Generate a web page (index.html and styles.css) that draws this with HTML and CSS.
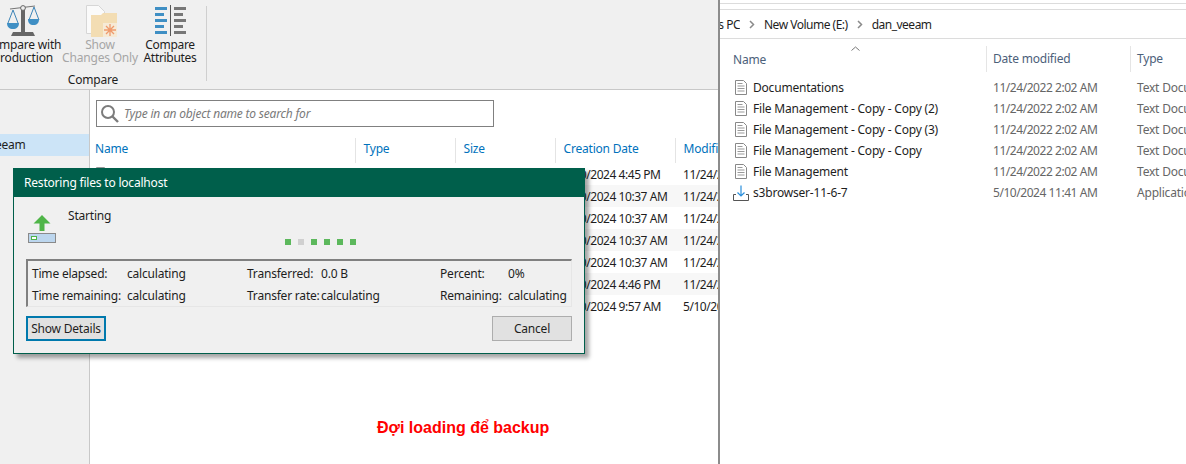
FILE: index.html
```html
<!DOCTYPE html>
<html lang="en">
<head>
    <meta charset="UTF-8">
    <meta name="viewport" content="width=device-width, initial-scale=1.0">
    <title>Restoring files to localhost</title>
    <link rel="stylesheet" href="styles.css">
</head>
<body>
    <div class="screen">
        <!-- Backup console window -->
        <section class="console">
            <div class="ribbon">
                <div class="ribbon-group">
                    <div class="ribbon-buttons">
                        <div class="ribbon-btn btn-production">
                            <svg width="34" height="33" viewBox="0 0 34 33">
                                <path d="M7 28h20l2 4H5z" fill="#666"/>
                                <rect x="15" y="4" width="4" height="25" fill="#666"/>
                                <path d="M4 5L29 2" stroke="#777" stroke-width="1.2"/>
                                <circle cx="17" cy="4" r="2.4" fill="#eee" stroke="#666"/>
                                <path d="M7 6L2 19M7 6l5 13M28 3l-5 13M28 3l5 13" stroke="#3d85b8" fill="none" stroke-width="1"/>
                                <path d="M1 19h12c0 4-2.500 6-6 6s-6-2-6-6zM22 15h11c0 4-2 6-5.500 6S22 19 22 15z" fill="#3f8fc4"/>
                            </svg>
                            <span>Compare with<br>Production</span>
                        </div>
                        <div class="ribbon-btn btn-changes is-disabled">
                            <svg width="34" height="33" viewBox="0 0 34 33">
                                <path d="M3.500 1.500h12l6 6v22h-18z" fill="#fafafa" stroke="#d6d6d6"/>
                                <path d="M8 14V11h10l2-2h14v24H8z" fill="#f3ddb3"/>
                                <rect x="20" y="19" width="14" height="14" fill="#f6ead6"/>
                                <path d="M27 20v12M21 26h12M23 22l8 8M31 22l-8 8" stroke="#ef9a6c" stroke-width="1.300"/>
                            </svg>
                            <span>Show<br>Changes Only</span>
                        </div>
                        <div class="ribbon-btn btn-attributes">
                            <svg width="34" height="33" viewBox="0 0 34 33">
                                <path d="M2 3h12v3H2zM2 9h9v3H2zM2 15h12v3H2zM2 21h9v3H2zM2 27h12v3H2z" fill="#3f8fc4"/>
                                <rect x="17" y="1" width="1" height="31" fill="#555"/>
                                <path d="M21 3h12v3H21zM21 9h9v3h-9zM21 15h12v3H21zM21 21h9v3h-9zM21 27h12v3H21z" fill="#777"/>
                            </svg>
                            <span>Compare<br>Attributes</span>
                        </div>
                    </div>
                    <div class="group-label">Compare</div>
                </div>
                <div class="ribbon-sep"></div>
            </div>

            <div class="console-body">
                <aside class="sidebar">
                    <div class="side-item"><span>dan_veeam</span></div>
                </aside>
                <main class="content">
                    <div class="search">
                        <svg width="19" height="19" viewBox="0 0 19 19">
                            <circle cx="8" cy="8" r="6" fill="none" stroke="#7c7c7c" stroke-width="2"/>
                            <path d="M12.500 12.500L18 18" stroke="#7c7c7c" stroke-width="2.400"/>
                        </svg>
                        <span>Type in an object name to search for</span>
                    </div>
                    <table class="objects">
                        <thead>
                            <tr>
                                <th>Name</th>
                                <th>Type</th>
                                <th>Size</th>
                                <th>Creation Date</th>
                                <th>Modified</th>
                            </tr>
                        </thead>
                        <tbody>
                            <tr><td><svg class="row-icon" width="12" height="15" viewBox="0 0 12 15"><path d="M.5.500h8l3 3v11H.5z" fill="#fff" stroke="#999"/></svg></td><td></td><td></td><td>5/10/2024 4:45 PM</td><td>11/24/2022 2:02 AM</td></tr>
                            <tr><td></td><td></td><td></td><td>5/10/2024 10:37 AM</td><td>11/24/2022 2:02 AM</td></tr>
                            <tr><td></td><td></td><td></td><td>5/10/2024 10:37 AM</td><td>11/24/2022 2:02 AM</td></tr>
                            <tr><td></td><td></td><td></td><td>5/10/2024 10:37 AM</td><td>11/24/2022 2:02 AM</td></tr>
                            <tr><td></td><td></td><td></td><td>5/10/2024 10:37 AM</td><td>11/24/2022 2:02 AM</td></tr>
                            <tr><td></td><td></td><td></td><td>5/10/2024 4:46 PM</td><td>11/24/2022 2:02 AM</td></tr>
                            <tr><td></td><td></td><td></td><td>5/10/2024 9:57 AM</td><td>5/10/2024 11:41 AM</td></tr>
                        </tbody>
                    </table>
                </main>
            </div>

            <p class="caption">Đợi loading để backup</p>

            <!-- Restore progress dialog -->
            <div class="dialog">
                <div class="dialog-title">Restoring files to localhost</div>
                <div class="dialog-body">
                    <div class="status">
                        <svg width="32" height="30" viewBox="0 0 32 30">
                            <path d="M16 1l8.500 8.500H18.500V17h-5V9.500H7.500z" fill="#4fb548"/>
                            <rect x="2.500" y="19.500" width="27" height="9" fill="#bcd6ee" stroke="#8a8a8a"/>
                            <rect x="5.500" y="22.500" width="5" height="3" fill="#fff" stroke="#4fb548"/>
                        </svg>
                        <div class="status-text">Starting</div>
                    </div>
                    <div class="dots">
                        <i></i><i class="off"></i><i></i><i></i><i></i><i></i>
                    </div>
                    <div class="stats">
                        <span>Time elapsed:</span><span>calculating</span>
                        <span>Transferred:</span><span>0.0 B</span>
                        <span>Percent:</span><span>0%</span>
                        <span>Time remaining:</span><span>calculating</span>
                        <span>Transfer rate:</span><span>calculating</span>
                        <span>Remaining:</span><span>calculating</span>
                    </div>
                    <div class="dialog-actions">
                        <button type="button" class="btn btn-focus">Show Details</button>
                        <button type="button" class="btn">Cancel</button>
                    </div>
                </div>
            </div>
        </section>

        <!-- File explorer window -->
        <section class="explorer">
            <div class="toolbar-edge"></div>
            <div class="address">
                <span class="crumb-first"><span>This PC</span></span>
                <svg class="chev" width="6" height="9" viewBox="0 0 6 9"><path d="M1 1l3.500 3.500L1 8" fill="none" stroke="#8a8a8a" stroke-width="1.500"/></svg>
                <span>New Volume (E:)</span>
                <svg class="chev" width="6" height="9" viewBox="0 0 6 9"><path d="M1 1l3.500 3.500L1 8" fill="none" stroke="#8a8a8a" stroke-width="1.500"/></svg>
                <span>dan_veeam</span>
            </div>
            <div class="file-head">
                <svg class="sort" width="9" height="5" viewBox="0 0 9 5"><path d="M.5 4.500l4-3.500 4 3.500" fill="none" stroke="#777"/></svg>
                <div class="col-name">Name</div>
                <div class="col-date">Date modified</div>
                <div class="col-type">Type</div>
            </div>
            <div class="file-list">
                <div class="file-row">
                    <div class="col-name"><svg class="file-icon" width="12" height="15" viewBox="0 0 12 15"><path d="M.5.5h8l3 3v11H.5z" fill="#fff" stroke="#888"/><path d="M2.500 3.500h5M2.500 6h7M2.500 8.500h7M2.500 11h7" stroke="#999"/></svg>Documentations</div>
                    <div class="col-date">11/24/2022 2:02 AM</div>
                    <div class="col-type">Text Document</div>
                </div>
                <div class="file-row">
                    <div class="col-name"><svg class="file-icon" width="12" height="15" viewBox="0 0 12 15"><path d="M.5.5h8l3 3v11H.5z" fill="#fff" stroke="#888"/><path d="M2.500 3.500h5M2.500 6h7M2.500 8.500h7M2.500 11h7" stroke="#999"/></svg>File Management - Copy - Copy (2)</div>
                    <div class="col-date">11/24/2022 2:02 AM</div>
                    <div class="col-type">Text Document</div>
                </div>
                <div class="file-row">
                    <div class="col-name"><svg class="file-icon" width="12" height="15" viewBox="0 0 12 15"><path d="M.5.5h8l3 3v11H.5z" fill="#fff" stroke="#888"/><path d="M2.500 3.500h5M2.500 6h7M2.500 8.500h7M2.500 11h7" stroke="#999"/></svg>File Management - Copy - Copy (3)</div>
                    <div class="col-date">11/24/2022 2:02 AM</div>
                    <div class="col-type">Text Document</div>
                </div>
                <div class="file-row">
                    <div class="col-name"><svg class="file-icon" width="12" height="15" viewBox="0 0 12 15"><path d="M.5.5h8l3 3v11H.5z" fill="#fff" stroke="#888"/><path d="M2.500 3.500h5M2.500 6h7M2.500 8.500h7M2.500 11h7" stroke="#999"/></svg>File Management - Copy - Copy</div>
                    <div class="col-date">11/24/2022 2:02 AM</div>
                    <div class="col-type">Text Document</div>
                </div>
                <div class="file-row">
                    <div class="col-name"><svg class="file-icon" width="12" height="15" viewBox="0 0 12 15"><path d="M.5.5h8l3 3v11H.5z" fill="#fff" stroke="#888"/><path d="M2.500 3.500h5M2.500 6h7M2.500 8.500h7M2.500 11h7" stroke="#999"/></svg>File Management</div>
                    <div class="col-date">11/24/2022 2:02 AM</div>
                    <div class="col-type">Text Document</div>
                </div>
                <div class="file-row">
                    <div class="col-name"><svg class="file-icon app-icon" width="16" height="16" viewBox="0 0 16 16"><path d="M3 9.500H.5v6h15v-6H13" fill="none" stroke="#555"/><path d="M8 .5v10M4.500 7.500L8 11l3.500-3.500" fill="none" stroke="#2a8fdc" stroke-width="1.200"/></svg>s3browser-11-6-7</div>
                    <div class="col-date">5/10/2024 11:41 AM</div>
                    <div class="col-type">Application</div>
                </div>
            </div>
        </section>
    </div>
</body>
</html>
```

FILE: styles.css
```css
* {
    box-sizing: border-box;
}
html, body {
    margin: 0;
    height: 100%;
    overflow: hidden;
}
body {
    font-family: "Noto Sans", "Open Sans", sans-serif;
    font-size: 12px;
    letter-spacing: -0.2px;
    color: #1e1e1e;
    background-color: #fff;
}
.screen {
    display: flex;
    width: 1186px;
    height: 464px;
    overflow: hidden;
}

/* left window */
.console {
    position: relative;
    flex: 0 0 720px;
    display: flex;
    flex-direction: column;
    border-right: 2px solid #8c8c8c;
    background-color: #fff;
    overflow: hidden;
}
.ribbon {
    flex: 0 0 90px;
    display: flex;
    align-items: flex-start;
    background-color: #f0f0f0;
    border-bottom: 1px solid #c8c8c8;
}
.ribbon-group {
    width: 220px;
    margin-left: -17px;
    padding-top: 4px;
}
.ribbon-buttons {
    display: flex;
    height: 68px;
}
.ribbon-btn {
    display: flex;
    flex-direction: column;
    align-items: center;
    text-align: center;
    line-height: 13px;
    white-space: nowrap;
}
.ribbon-btn svg {
    margin-bottom: 1px;
}
.ribbon-btn span {
    display: block;
}
.btn-production {
    width: 80px;
}
.btn-changes {
    width: 74px;
}
.btn-attributes {
    width: 66px;
    letter-spacing: -0.3px;
}
.is-disabled {
    color: #a6a6a6;
}
.group-label {
    text-align: center;
    line-height: 15px;
}
.ribbon-sep {
    width: 1px;
    height: 75px;
    margin: 6px 0 0 3px;
    background-color: #cfcfcf;
}
.console-body {
    flex: 1;
    display: flex;
    min-height: 0;
}
.sidebar {
    flex: 0 0 90px;
    padding-top: 44px;
    background-color: #f0f0f0;
    border-right: 1px solid #c8c8c8;
}
.side-item {
    display: flex;
    justify-content: flex-start;
    height: 22px;
    line-height: 22px;
    background-color: #cce4f7;
    overflow: hidden;
}
.side-item span {
    margin-left: -37px;
    white-space: nowrap;
}
.content {
    flex: 1;
    min-width: 0;
    overflow: hidden;
}
.search {
    display: flex;
    align-items: center;
    gap: 5px;
    width: 398px;
    height: 27px;
    margin: 10px 0 0 6px;
    padding-left: 3px;
    border: 1px solid #808080;
    font-style: italic;
    color: #7a7a7a;
}
.objects {
    table-layout: fixed;
    width: 628px;
    margin-top: 11px;
    border-collapse: collapse;
    white-space: nowrap;
}
.objects th {
    height: 25px;
    padding: 0 0 4px 8px;
    font-weight: normal;
    text-align: left;
    color: #0072bc;
    overflow: hidden;
}
.objects th:first-child {
    width: 265px;
    padding-left: 5px;
}
.objects th:nth-child(2),
.objects th:nth-child(3) {
    width: 100px;
}
.objects th:nth-child(4) {
    width: 120px;
}
.objects th + th {
    border-left: 1px solid #e4e4e4;
}
.objects td {
    height: 22px;
    padding: 0 0 0 8px;
    letter-spacing: -0.45px;
    overflow: hidden;
}
.objects td:first-child {
    padding-left: 6px;
}
.row-icon {
    display: block;
}
.objects tbody tr:nth-child(even) {
    background-color: #f7f7f7;
}
.caption {
    position: absolute;
    left: 377px;
    top: 418px;
    margin: 0;
    font-family: "Liberation Sans", Arial, sans-serif;
    font-size: 16px;
    line-height: 20px;
    font-weight: bold;
    letter-spacing: 0;
    color: #f00;
}

/* progress dialog */
.dialog {
    position: absolute;
    left: 13px;
    top: 168px;
    width: 572px;
    height: 186px;
    border: 1px solid #005f4b;
    background-color: #f0f0f0;
    box-shadow: 4px 4px 4px rgba(0, 0, 0, 0.35);
}
.dialog-title {
    height: 29px;
    margin: -1px -1px 0;
    padding-left: 11px;
    line-height: 30px;
    color: #fff;
    background-color: #005f4b;
}
.dialog-body {
    padding: 0 12px;
}
.status {
    display: flex;
    height: 62px;
    padding-top: 17px;
}
.status-text {
    margin: -8px 0 0 10px;
    line-height: 20px;
}
.dots {
    display: flex;
    gap: 7px;
    height: 0;
    margin-left: 259px;
    margin-top: -20px;
    margin-bottom: 20px;
}
.dots i {
    flex: 0 0 6px;
    height: 6px;
    background-color: #5cb85c;
}
.dots .off {
    background-color: #d0d0d0;
}
.stats {
    display: grid;
    grid-template-columns: 95px 120px 74px 119px 68px 1fr;
    grid-auto-rows: 22px;
    align-items: center;
    height: 48px;
    width: 546px;
    padding: 1px 0 0 4px;
    border: 1px solid #e6e6e6;
    border-top: 2px solid #808080;
    border-left: 2px solid #808080;
    white-space: nowrap;
}
.dialog-actions {
    display: flex;
    justify-content: space-between;
    width: 546px;
    margin-top: 9px;
}
.btn {
    width: 80px;
    height: 25px;
    padding: 0;
    font: inherit;
    letter-spacing: inherit;
    color: inherit;
    background-color: #e1e1e1;
    border: 1px solid #adadad;
}
.btn-focus {
    border: 2px solid #0079ad;
}

/* right window */
.explorer {
    flex: 1;
    min-width: 0;
    overflow: hidden;
    background-color: #fff;
}
.toolbar-edge {
    height: 7px;
    margin-top: 3px;
    border-top: 1px solid #dcdcdc;
    border-bottom: 1px solid #dcdcdc;
}
.address {
    display: flex;
    align-items: center;
    gap: 9px;
    height: 29px;
    border-bottom: 1px solid #dcdcdc;
    letter-spacing: -0.5px;
    white-space: nowrap;
}
.crumb-first {
    display: flex;
    justify-content: flex-end;
    width: 20px;
    overflow: hidden;
}
.file-head {
    position: relative;
    display: flex;
    height: 26px;
    margin-top: 7px;
    line-height: 25px;
    color: #4c607a;
}
.sort {
    position: absolute;
    left: 131px;
    top: 0;
}
.col-name {
    display: flex;
    align-items: center;
    flex: 0 0 266px;
    padding-left: 13px;
    white-space: nowrap;
}
.col-date {
    flex: 0 0 144px;
    padding-left: 7px;
    white-space: nowrap;
}
.col-type {
    flex: 1;
    padding-left: 7px;
    white-space: nowrap;
}
.file-head .col-date,
.file-head .col-type {
    padding-left: 6px;
    border-left: 1px solid #e5e5e5;
}
.file-list {
    padding-top: 5px;
}
.file-row {
    display: flex;
    align-items: center;
    height: 21px;
}
.file-row .col-date {
    letter-spacing: -0.45px;
}
.file-row .col-date,
.file-row .col-type {
    color: #666;
}
.file-icon {
    flex: none;
    margin: 0 6px 0 2px;
}
.app-icon {
    margin: 0 4px 0 0;
}
```
